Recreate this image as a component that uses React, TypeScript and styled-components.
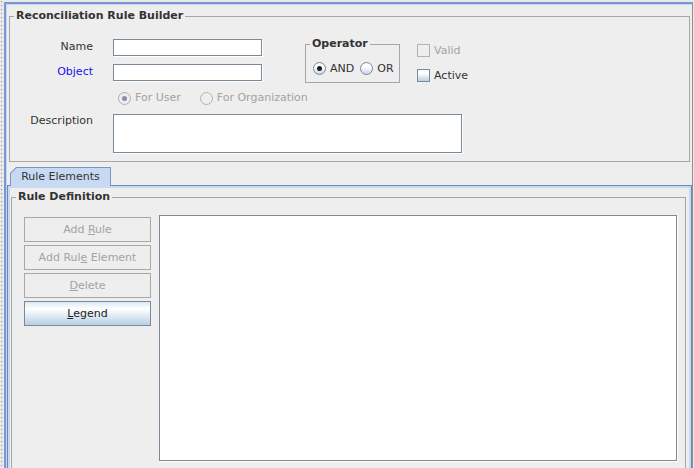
import styled, { createGlobalStyle } from "styled-components";

const GlobalStyle = createGlobalStyle`
  html, body {
    margin: 0;
    padding: 0;
    background: #eeeeee;
  }
  body {
    font-family: "DejaVu Sans", Verdana, sans-serif;
    font-size: 11px;
    color: #333333;
  }
  * {
    box-sizing: border-box;
  }
`;

const App = () => {
  return (
    <>
      <GlobalStyle />
      <Page>
        <Gutter />
        <Frame>
          <Group>
            <GroupTitle>Reconciliation Rule Builder</GroupTitle>
            <BuilderGrid>
              <FieldLabel $row={1}>Name</FieldLabel>
              <TextField $row={1} readOnly />
              <FieldLabel $row={2} $link>Object</FieldLabel>
              <TextField $row={2} readOnly />

              <Operator>
                <GroupTitle>Operator</GroupTitle>
                <RadioRow $gap={6} $indent={7}>
                  <Radio>
                    <RadioCircle><RadioDot /></RadioCircle>
                    AND
                  </Radio>
                  <Radio>
                    <RadioCircle />
                    OR
                  </Radio>
                </RadioRow>
              </Operator>

              <Checks>
                <Check $disabled>
                  <CheckBox $disabled />
                  Valid
                </Check>
                <Check>
                  <CheckBox />
                  Active
                </Check>
              </Checks>

              <OwnerRow $gap={19} $indent={5}>
                <Radio $disabled>
                  <RadioCircle $disabled><RadioDot $disabled /></RadioCircle>
                  For User
                </Radio>
                <Radio $disabled>
                  <RadioCircle $disabled />
                  For Organization
                </Radio>
              </OwnerRow>

              <FieldLabel $row={4} $top>Description</FieldLabel>
              <DescriptionArea readOnly />
            </BuilderGrid>
          </Group>

          <TabStrip>
            <Tab>
              <TabFace>Rule Elements</TabFace>
            </Tab>
          </TabStrip>

          <TabPanel>
            <DefinitionGroup>
              <GroupTitle>Rule Definition</GroupTitle>
              <DefinitionBody>
                <ActionColumn>
                  <ActionButton disabled>Add <u>R</u>ule</ActionButton>
                  <ActionButton disabled>Add Rul<u>e</u> Element</ActionButton>
                  <ActionButton disabled><u>D</u>elete</ActionButton>
                  <ActionButton><u>L</u>egend</ActionButton>
                </ActionColumn>
                <RuleCanvas />
              </DefinitionBody>
            </DefinitionGroup>
          </TabPanel>
        </Frame>
      </Page>
    </>
  );
};

export default App;

const Page = styled.div`
  display: flex;
  width: 694px;
  height: 468px;
  overflow: hidden;
  background: #e9e9e9;
`;

const Gutter = styled.div`
  flex: none;
  width: 4px;
  background-image: linear-gradient(#8c8c8c 25%, transparent 25%);
  background-size: 1px 4px;
  background-repeat: repeat-y;
  background-position: 1px 1px;
`;

const Frame = styled.div`
  flex: 1;
  display: flex;
  flex-direction: column;
  min-height: 0;
  margin: 2px 1px 0 0;
  background: #eeeeee;
  border-top: 2px solid #7b97d1;
  border-left: 2px solid #7b97d1;
  border-right: 1px solid #8e8e8e;
  box-shadow: inset 1px 1px 0 #c6d6f0;
`;

const Group = styled.fieldset`
  margin: 5px 2px 0 3px;
  padding: 16px 0 7px 0;
  min-width: 0;
  border: 1px solid #a6a6a6;
`;

const GroupTitle = styled.legend`
  margin-left: 4px;
  padding: 0 2px;
  font-weight: bold;
  font-size: 11px;
  line-height: 14px;
  color: #333333;
`;

const BuilderGrid = styled.div`
  display: grid;
  grid-template-columns: 103px 192px 112px auto;
  grid-template-rows: 18px 18px 18px 40px;
  row-gap: 7px;
`;

const FieldLabel = styled.label<{ $row: number; $link?: boolean; $top?: boolean }>`
  grid-column: 1;
  grid-row: ${(p) => p.$row};
  align-self: ${(p) => (p.$top ? "start" : "center")};
  padding-right: 20px;
  text-align: right;
  line-height: 14px;
  margin-top: ${(p) => (p.$top ? "0" : "-2px")};
  color: ${(p) => (p.$link ? "#1414f0" : "#333333")};
`;

const TextField = styled.input<{ $row: number }>`
  grid-column: 2;
  grid-row: ${(p) => p.$row};
  width: 149px;
  height: 17px;
  margin: 0;
  padding: 0 2px;
  border: 1px solid #7a8a99;
  border-radius: 0;
  background: #ffffff;
  box-shadow: 1px 1px 0 #ffffff;
  font: inherit;
  outline: none;
`;

const Operator = styled.fieldset`
  grid-column: 3;
  grid-row: 1 / span 2;
  align-self: start;
  width: 95px;
  margin: -2px 0 0 0;
  padding: 10px 0 6px 0;
  min-width: 0;
  border: 1px solid #a6a6a6;
`;

const RadioRow = styled.div<{ $gap: number; $indent: number }>`
  display: flex;
  align-items: center;
  gap: ${(p) => p.$gap}px;
  height: 15px;
  padding-left: ${(p) => p.$indent}px;
`;

const OwnerRow = styled(RadioRow)`
  grid-column: 2 / span 3;
  grid-row: 3;
  align-self: center;
`;

const Radio = styled.span<{ $disabled?: boolean }>`
  display: inline-flex;
  align-items: center;
  gap: 4px;
  line-height: 14px;
  color: ${(p) => (p.$disabled ? "#a3a3a3" : "#333333")};
`;

const RadioCircle = styled.span<{ $disabled?: boolean }>`
  flex: none;
  display: inline-flex;
  align-items: center;
  justify-content: center;
  width: 13px;
  height: 13px;
  border-radius: 50%;
  border: 1px solid ${(p) => (p.$disabled ? "#b0b0b0" : "#7a8a99")};
  background: ${(p) =>
    p.$disabled ? "#eeeeee" : "linear-gradient(#f4f8fc, #ffffff 35%, #c4d6ec)"};
`;

const RadioDot = styled.span<{ $disabled?: boolean }>`
  width: 5px;
  height: 5px;
  border-radius: 50%;
  background: ${(p) => (p.$disabled ? "#8391a0" : "#1e1e1e")};
`;

const Checks = styled.div`
  grid-column: 4;
  grid-row: 1 / span 2;
  display: flex;
  flex-direction: column;
  gap: 12px;
  padding-top: 5px;
`;

const Check = styled.span<{ $disabled?: boolean }>`
  display: inline-flex;
  align-items: center;
  gap: 4px;
  height: 13px;
  line-height: 14px;
  color: ${(p) => (p.$disabled ? "#a3a3a3" : "#333333")};
`;

const CheckBox = styled.span<{ $disabled?: boolean }>`
  flex: none;
  width: 13px;
  height: 13px;
  border: 1px solid ${(p) => (p.$disabled ? "#aab4bf" : "#7a8a99")};
  background: ${(p) =>
    p.$disabled ? "#eeeeee" : "linear-gradient(#f4f8fc, #ffffff 30%, #b8cfe5)"};
`;

const DescriptionArea = styled.textarea`
  grid-column: 2 / span 3;
  grid-row: 4;
  width: 349px;
  height: 39px;
  margin: 0;
  padding: 2px;
  border: 1px solid #7a8a99;
  border-radius: 0;
  background: #ffffff;
  box-shadow: 1px 1px 0 #ffffff;
  font: inherit;
  resize: none;
  outline: none;
`;

const TabStrip = styled.div`
  display: flex;
  margin: 5px 0 0 4px;
`;

const Tab = styled.div`
  position: relative;
  z-index: 1;
  width: 101px;
  height: 19px;
  margin-bottom: -1px;
  padding: 1px 1px 0 1px;
  background: #7f94bd;
  clip-path: polygon(0 6px, 6px 0, 100% 0, 100% 100%, 0 100%);
`;

const TabFace = styled.div`
  height: 100%;
  background: #c8daf3;
  clip-path: polygon(0 5.5px, 5.5px 0, 100% 0, 100% 100%, 0 100%);
  text-align: center;
  line-height: 17px;
  color: #333333;
`;

const TabPanel = styled.div`
  flex: 1;
  min-height: 0;
  overflow: hidden;
  margin-left: 1px;
  padding: 4px 5px 0 3px;
  border: 1px solid #6f88b6;
  border-bottom: none;
  box-shadow: inset 2px 2px 0 #c8daf3, inset -2px 0 0 #c8daf3;
`;

const DefinitionGroup = styled.fieldset`
  margin: 0;
  padding: 11px 8px 40px 0;
  min-width: 0;
  border: 1px solid #a6a6a6;
`;

const DefinitionBody = styled.div`
  display: flex;
  align-items: flex-start;
  gap: 8px;
  padding-left: 12px;
`;

const ActionColumn = styled.div`
  display: flex;
  flex-direction: column;
  gap: 3px;
  width: 127px;
  margin-top: 2px;
`;

const ActionButton = styled.button`
  height: 25px;
  margin: 0;
  padding: 0;
  border: 1px solid #7a8a99;
  border-radius: 0;
  background: linear-gradient(#dde8f3, #ffffff 30%, #b8cfe5);
  font: inherit;
  color: #222222;
  cursor: pointer;

  &:disabled {
    border-color: #a8a8a8;
    background: #eeeeee;
    color: #a3a3a3;
    cursor: default;
  }
`;

const RuleCanvas = styled.div`
  flex: 1;
  height: 246px;
  border: 1px solid #7a8a99;
  background: #ffffff;
  box-shadow: 1px 1px 0 #ffffff;
`;
